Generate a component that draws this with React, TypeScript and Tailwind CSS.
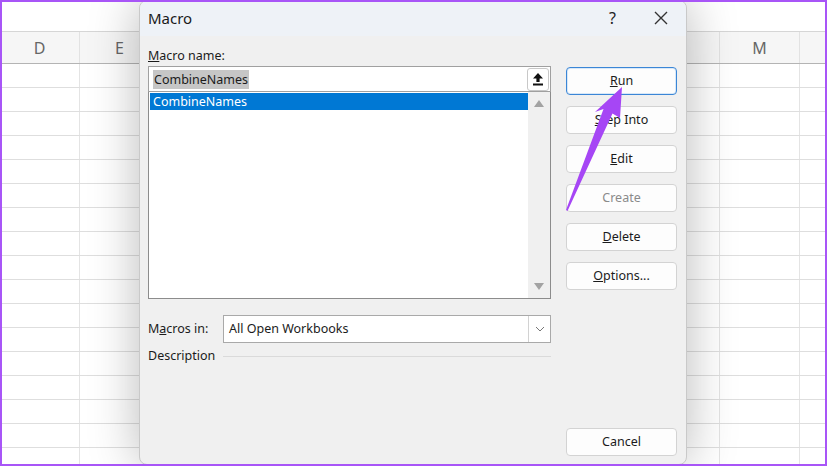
import React from "react";

const COLS = ["D", "E", "F", "G", "H", "I", "J", "K", "L", "M", ""];
const ROWS = Array.from({ length: 17 }, (_, i) => i);

function Sheet() {
  return (
    <div className="flex flex-col bg-white">
      <div className="h-[31px] bg-white" />
      {/* column headers */}
      <div className="flex h-[33px] border-y border-t-[#d6d6d6] border-b-[#b4b4b4] bg-[#f6f6f6]">
        {COLS.map((c, i) => (
          <div
            key={i}
            className="w-[80px] shrink-0 border-r border-[#e2e2e2] flex items-center justify-center text-[16px] text-[#666]"
          >
            {c}
          </div>
        ))}
      </div>
      {ROWS.map((r) => (
        <div key={r} className="flex h-[24px] border-b border-[#dedede]">
          {COLS.map((c, i) => (
            <div key={i} className="w-[80px] shrink-0 border-r border-[#e4e4e4]" />
          ))}
        </div>
      ))}
    </div>
  );
}

function UploadIcon() {
  return (
    <svg width="12" height="14" viewBox="0 0 12 14">
      <path d="M6 1 L11 6.5 L7.6 6.5 L7.6 10 L4.4 10 L4.4 6.5 L1 6.5 Z" fill="#111" />
      <rect x="1" y="11.5" width="10" height="2" fill="#111" />
    </svg>
  );
}

function Tri({ down }: { down?: boolean }) {
  return (
    <svg width="10" height="7" viewBox="0 0 10 7">
      <path d={down ? "M0 0 L10 0 L5 7 Z" : "M5 0 L10 7 L0 7 Z"} fill="#a3a3a3" />
    </svg>
  );
}

function DlgButton({
  children,
  primary,
  disabled,
}: {
  children: React.ReactNode;
  primary?: boolean;
  disabled?: boolean;
}) {
  return (
    <div
      className={`h-[28px] w-[111px] rounded-[4px] flex items-center justify-center text-[12.5px] ${
        primary
          ? "border border-[#3b86d6] bg-[#fdfdfd] shadow-[inset_0_0_0_1px_#d8e8f8]"
          : "border border-[#d3d3d3] bg-[#fdfdfd]"
      } ${disabled ? "text-[#8a8a8a]" : "text-[#1b1b1b]"}`}
    >
      {children}
    </div>
  );
}

function MacroDialog() {
  return (
    <div className="absolute left-[139px] top-0 w-[548px] h-[465px] rounded-[8px] bg-[#f0f0f0] border border-[#c9c9c9] shadow-[0_0_50px_rgba(0,0,0,0.28)] flex flex-col overflow-hidden font-['Noto_Sans','Open_Sans',sans-serif]">
      {/* title bar */}
      <div className="h-[35px] shrink-0 bg-[#eef2f7] flex items-center pl-[8px] pr-[18px] pb-[1px]">
        <span className="text-[15px] text-[#1a1a1a]">Macro</span>
        <span className="ml-auto text-[16px] text-[#222] mr-[38px]">?</span>
        <svg width="14" height="14" viewBox="0 0 14 14">
          <path d="M1 1 L13 13 M13 1 L1 13" stroke="#333" strokeWidth="1.4" />
        </svg>
      </div>

      {/* body */}
      <div className="flex flex-1 pl-[8px] pr-[9px] pt-[10px] pb-[8px] gap-[15px]">
        {/* left column */}
        <div className="w-[403px] flex flex-col">
          <div className="h-[19px] text-[12.5px] text-[#1b1b1b] leading-[19px]">
            <span className="underline">M</span>acro name:
          </div>
          <div className="mt-[1px] h-[26px] border border-[#a0a0a0] bg-white flex items-center pl-[4px] pr-[1px]">
            <span className="bg-[#c6c6c6] text-[12.5px] text-[#1b1b1b] leading-[19px] px-[1px]">CombineNames</span>
            <div className="ml-auto h-[23px] w-[22px] border border-[#c8c8c8] rounded-[3px] bg-white flex items-center justify-center">
              <UploadIcon />
            </div>
          </div>
          <div className="h-[207px] border border-t-0 border-[#8c8c8c] bg-white flex">
            <div className="flex-1 pt-[1px] pl-[1px]">
              <div className="h-[17px] bg-[#0078d4] text-white text-[12.5px] leading-[17px] pl-[3px]">CombineNames</div>
            </div>
            <div className="w-[22px] bg-[#f0f0f0] flex flex-col items-center justify-between py-[8px]">
              <Tri />
              <Tri down />
            </div>
          </div>

          <div className="mt-[16px] flex items-center h-[28px]">
            <div className="w-[75px] text-[12.5px] text-[#1b1b1b]">
              M<span className="underline">a</span>cros in:
            </div>
            <div className="flex-1 h-[28px] border border-[#a9a9a9] bg-white flex items-center">
              <span className="pl-[5px] text-[12.5px] text-[#1b1b1b]">All Open Workbooks</span>
              <div className="ml-auto h-full w-[22px] border-l border-[#d2d2d2] flex items-center justify-center">
                <svg width="10" height="6" viewBox="0 0 10 6">
                  <path d="M1 1 L5 5 L9 1" stroke="#777" strokeWidth="1" fill="none" />
                </svg>
              </div>
            </div>
          </div>

          <div className="mt-[3px] flex items-center h-[20px] gap-[8px]">
            <span className="text-[12.5px] text-[#1b1b1b]">Description</span>
            <div className="flex-1 h-px bg-[#dadada]" />
          </div>
        </div>

        {/* right column */}
        <div className="w-[111px] flex flex-col gap-[11px] pt-[21px]">
          <DlgButton primary>
            <span>
              <span className="underline">R</span>un
            </span>
          </DlgButton>
          <DlgButton>
            <span>
              <span className="underline">S</span>tep Into
            </span>
          </DlgButton>
          <DlgButton>
            <span>
              <span className="underline">E</span>dit
            </span>
          </DlgButton>
          <DlgButton disabled>Create</DlgButton>
          <DlgButton>
            <span>
              <span className="underline">D</span>elete
            </span>
          </DlgButton>
          <DlgButton>
            <span>
              <span className="underline">O</span>ptions...
            </span>
          </DlgButton>
          <div className="mt-auto">
            <DlgButton>Cancel</DlgButton>
          </div>
        </div>
      </div>
    </div>
  );
}

export default function App() {
  return (
    <div className="relative w-[827px] h-[466px] overflow-hidden bg-white font-['Noto_Sans','Open_Sans',sans-serif]">
      <Sheet />
      <MacroDialog />
      {/* annotation arrow */}
      <svg className="absolute left-0 top-0 pointer-events-none" width="827" height="466" viewBox="0 0 827 466">
        <path d="M622 87 L620 118 L612.5 113.5 L567.5 211 L566 210 L603.5 109 L595 112 Z" fill="#a646f5" />
      </svg>
      {/* screenshot frame */}
      <div className="absolute inset-0 border-2 border-[#a855f7] pointer-events-none" />
    </div>
  );
}
